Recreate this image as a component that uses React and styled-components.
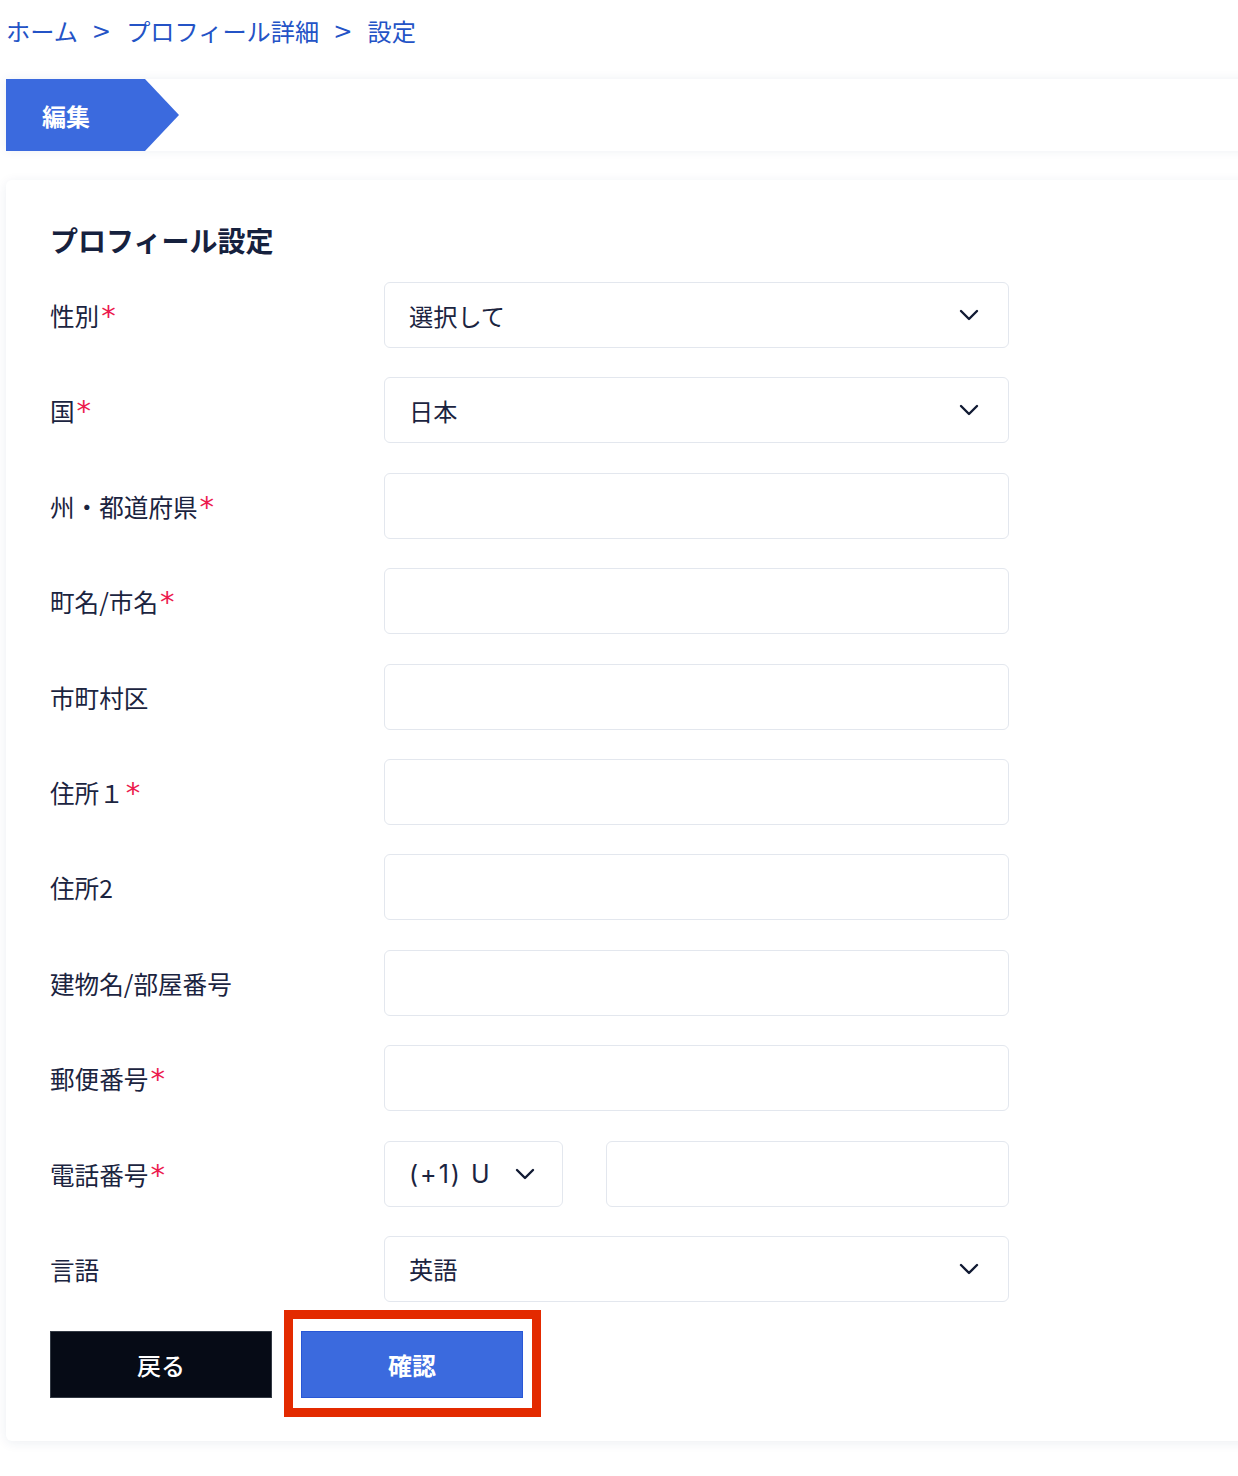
import styled, { createGlobalStyle } from "styled-components";

const GlobalStyle = createGlobalStyle`
  body {
    margin: 0;
    background: #ffffff;
    font-family: "Noto Sans CJK JP", "Noto Sans", sans-serif;
    color: #1b2440;
    overflow-x: hidden;
  }
`;

const fields = [
  { label: "性別", required: true, type: "select", value: "選択して" },
  { label: "国", required: true, type: "select", value: "日本" },
  { label: "州・都道府県", required: true },
  { label: "町名/市名", required: true },
  { label: "市町村区" },
  { label: "住所１", required: true },
  { label: "住所2" },
  { label: "建物名/部屋番号" },
  { label: "郵便番号", required: true },
  { label: "電話番号", required: true, type: "phone" },
  { label: "言語", type: "select", value: "英語" },
];

const Chevron = () => (
  <svg width="20" height="12" viewBox="0 0 20 12" fill="none">
    <polyline
      points="2,2 10,10 18,2"
      stroke="#111a33"
      strokeWidth="2.4"
      strokeLinecap="round"
      strokeLinejoin="round"
    />
  </svg>
);

const App = () => {
  const renderControl = (f) => {
    if (f.type === "select") {
      return (
        <SelectBox>
          <span>{f.value}</span>
          <Chevron />
        </SelectBox>
      );
    }
    if (f.type === "phone") {
      return (
        <PhoneGroup>
          <SelectBox $compact>
            <DialCode>(+1) U</DialCode>
            <Chevron />
          </SelectBox>
          <TextInput type="tel" />
        </PhoneGroup>
      );
    }
    return <TextInput type="text" />;
  };

  return (
    <Page>
      <GlobalStyle />
      <Breadcrumb>
        <Crumb>ホーム</Crumb>
        <Sep>&gt;</Sep>
        <Crumb>プロフィール詳細</Crumb>
        <Sep>&gt;</Sep>
        <Crumb>設定</Crumb>
      </Breadcrumb>

      <TabBar>
        <Tab>編集</Tab>
      </TabBar>

      <Card>
        <Title>プロフィール設定</Title>
        <Form>
          {fields.map((f) => (
            <Row key={f.label}>
              <Label>
                {f.label}
                {f.required && <Req>*</Req>}
              </Label>
              {renderControl(f)}
            </Row>
          ))}
        </Form>
        <Actions>
          <Button type="button" $variant="dark">
            戻る
          </Button>
          <Highlight>
            <Button type="button" $variant="primary">
              確認
            </Button>
          </Highlight>
        </Actions>
      </Card>
    </Page>
  );
};

export default App;

const Page = styled.div`
  padding: 0 0 35px 6px;
`;

const Breadcrumb = styled.nav`
  display: flex;
  align-items: center;
  height: 36px;
  margin-top: 13px;
  font-size: 24.2px;
  color: #2453c6;
`;

const Crumb = styled.span`
  line-height: 36px;
`;

const Sep = styled.span`
  font-family: "DejaVu Sans", sans-serif;
  font-size: 23px;
  margin: 0 15px 0 14px;
`;

const TabBar = styled.div`
  display: flex;
  height: 72px;
  margin-top: 30px;
  margin-right: -40px;
  background: #ffffff;
  box-shadow: 0 0 10px rgba(30, 50, 100, 0.07);
`;

const Tab = styled.div`
  display: flex;
  align-items: center;
  width: 173px;
  padding-left: 36px;
  box-sizing: border-box;
  background: #3b6ade;
  clip-path: polygon(0 0, 139px 0, 100% 50%, 139px 100%, 0 100%);
  color: #ffffff;
  font-size: 24px;
  font-weight: 700;
`;

const Card = styled.section`
  margin-top: 29px;
  margin-right: -40px;
  padding: 36px 44px 43px;
  background: #ffffff;
  border-radius: 6px;
  box-shadow: 0 2px 12px rgba(30, 50, 100, 0.08);
`;

const Title = styled.h2`
  margin: 0 0 18px;
  font-size: 28px;
  line-height: 48px;
  font-weight: 700;
  color: #16213e;
`;

const Form = styled.div`
  display: flex;
  flex-direction: column;
  gap: 29.4px;
`;

const Row = styled.div`
  display: grid;
  grid-template-columns: 334px 625px;
  align-items: center;
`;

const Label = styled.label`
  font-size: 24.6px;
  color: #1b2440;
`;

const Req = styled.span`
  margin-left: 2px;
  font-family: "DejaVu Sans", sans-serif;
  font-size: 29px;
  line-height: 1;
  color: #ec1a4e;
`;

const SelectBox = styled.div`
  display: flex;
  align-items: center;
  justify-content: space-between;
  height: 66px;
  box-sizing: border-box;
  padding: 0 29px 0 24px;
  border: 1.5px solid #e3e7ee;
  border-radius: 6px;
  background: #ffffff;
  font-size: 24.2px;
  color: #1b2440;
  width: ${(props) => (props.$compact ? "179px" : "100%")};
  gap: ${(props) => (props.$compact ? "16px" : "0")};
  ${(props) => props.$compact && "padding-right: 27px;"}

  span {
    white-space: nowrap;
    overflow: hidden;
  }
`;

const DialCode = styled.span`
  font-family: "Inter", "Noto Sans CJK JP", sans-serif;
  font-size: 25px;
  letter-spacing: 2px;
`;

const TextInput = styled.input`
  height: 66px;
  width: 100%;
  box-sizing: border-box;
  padding: 0 24px;
  border: 1.5px solid #e3e7ee;
  border-radius: 6px;
  background: #ffffff;
  font: inherit;
  font-size: 24px;
  outline: none;
`;

const PhoneGroup = styled.div`
  display: grid;
  grid-template-columns: 179px 1fr;
  gap: 43px;
`;

const Actions = styled.div`
  display: flex;
  gap: 29px;
  margin-top: 29px;
`;

const Highlight = styled.div`
  position: relative;

  &::after {
    content: "";
    position: absolute;
    top: -21px;
    left: -17px;
    right: -18px;
    bottom: -19px;
    border: 9px solid #e32a00;
    pointer-events: none;
  }
`;

const Button = styled.button`
  width: 222px;
  height: 67px;
  border: 1px solid
    ${(props) => (props.$variant === "primary" ? "#2857d6" : "#333a44")};
  background: ${(props) =>
    props.$variant === "primary" ? "#3b6ade" : "#060b16"};
  color: #ffffff;
  font-family: inherit;
  font-size: 24px;
  font-weight: ${(props) => (props.$variant === "primary" ? 700 : 500)};
  cursor: pointer;
`;
